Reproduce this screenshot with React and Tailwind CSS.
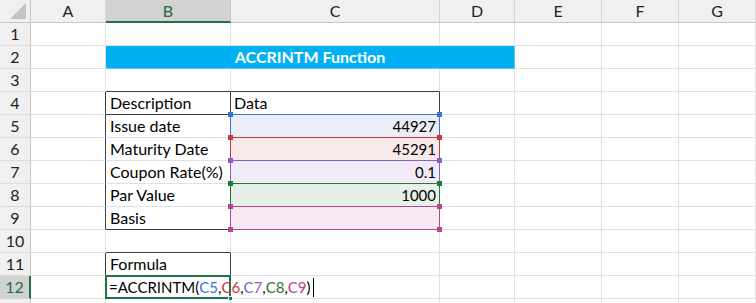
import React from "react";

const GRID = "border-r-[#e1e1e1]";
const GRIDB = "border-b-[#e1e1e1]";

function Cell({ r = GRID, b = GRIDB, className = "", children, span = "" }) {
  return (
    <div className={`relative h-[23px] whitespace-nowrap border-r border-b ${r} ${b} ${span} ${className}`}>
      {children}
    </div>
  );
}

function RowHead({ n, active }) {
  return (
    <div
      className={
        active
          ? "h-[23px] flex items-center justify-center border-b border-b-[#d4d4d4] border-r-2 border-r-[#217346] bg-[#d2d2d2] text-[#1e6b3c] text-[16px]"
          : "h-[23px] flex items-center justify-center border-b border-b-[#dcdcdc] border-r border-r-[#c6c6c6] bg-[#f0f0f0] text-[#222] text-[16px]"
      }
    >
      {n}
    </div>
  );
}

function Handles({ color }) {
  return (
    <>
      <span className={`absolute z-10 -left-[3px] -top-[3px] w-[5px] h-[5px] ${color}`} />
      <span className={`absolute z-10 -right-[3px] -top-[3px] w-[5px] h-[5px] ${color}`} />
      <span className={`absolute z-10 -left-[3px] -bottom-[3px] w-[5px] h-[5px] ${color}`} />
      <span className={`absolute z-10 -right-[3px] -bottom-[3px] w-[5px] h-[5px] ${color}`} />
    </>
  );
}

const DARK_R = "border-r-[#3f3f3f]";
const DARK_B = "border-b-[#3f3f3f]";

// colored reference boxes for C5:C9
const refs = [
  { n: 5, label: "Issue date", value: "44927", line: "border-r-[#3d72d4]", lineB: "border-b-[#3d72d4]", fill: "bg-[#e9eef8]", handle: "bg-[#3d72d4]" },
  { n: 6, label: "Maturity Date", value: "45291", line: "border-r-[#c8363f]", lineB: "border-b-[#c8363f]", fill: "bg-[#fae9e9]", handle: "bg-[#c8363f]" },
  { n: 7, label: "Coupon Rate(%)", value: "0.1", line: "border-r-[#8b5dc6]", lineB: "border-b-[#8b5dc6]", fill: "bg-[#f0ebf7]", handle: "bg-[#8b5dc6]" },
  { n: 8, label: "Par Value", value: "1000", line: "border-r-[#1f7a36]", lineB: "border-b-[#1f7a36]", fill: "bg-[#e6f0e6]", handle: "bg-[#1f7a36]" },
  { n: 9, label: "Basis", value: "", line: "border-r-[#b3478f]", lineB: "border-b-[#b3478f]", fill: "bg-[#f6e9f2]", handle: "bg-[#b3478f]" },
];

// columns E, F, G
function EmptyTail() {
  return (
    <>
      <Cell />
      <Cell />
      <Cell />
    </>
  );
}

export default function App() {
  const cols = ["A", "B", "C", "D", "E", "F", "G"];

  return (
    <div className="w-[756px] h-[303px] overflow-hidden bg-white font-['Lato','Liberation_Sans',sans-serif] text-[16px] text-black">
      <div className="grid grid-cols-[31px_75px_125px_209px_75px_87px_77px_77px]">
        {/* Column headers */}
        <div className="relative h-[23px] bg-[#f0f0f0] border-r border-b border-r-[#c6c6c6] border-b-[#c6c6c6]">
          <svg className="absolute right-[4px] bottom-[3px]" width="16" height="16" viewBox="0 0 16 16">
            <polygon points="16,0 16,16 0,16" fill="#c4c4c4" />
          </svg>
        </div>
        {cols.map((c) =>
          c === "B" ? (
            <div
              key={c}
              className="h-[23px] flex items-center justify-center bg-[#d2d2d2] border-r border-r-[#c6c6c6] border-b-2 border-b-[#217346] text-[#1e6b3c] text-[16px]"
            >
              {c}
            </div>
          ) : (
            <div
              key={c}
              className="h-[23px] flex items-center justify-center bg-[#f0f0f0] border-r border-r-[#d4d4d4] border-b border-b-[#c6c6c6] text-[#222] text-[16px]"
            >
              {c}
            </div>
          )
        )}

        {/* Row 1 */}
        <RowHead n={1} />
        <Cell />
        <Cell />
        <Cell />
        <Cell />
        <EmptyTail />

        {/* Row 2 - title banner */}
        <RowHead n={2} />
        <Cell />
        <Cell
          span="col-span-3"
          r="border-r-[#5cc8f2]"
          b="border-b-[#5cc8f2]"
          className="bg-[#00b0f0] flex items-center justify-center text-white font-bold text-[16px]"
        >
          ACCRINTM Function
        </Cell>
        <EmptyTail />

        {/* Row 3 */}
        <RowHead n={3} />
        <Cell />
        <Cell b={DARK_B} />
        <Cell b={DARK_B} />
        <Cell />
        <EmptyTail />

        {/* Row 4 - table header */}
        <RowHead n={4} />
        <Cell r={DARK_R} />
        <Cell r={DARK_R} b={DARK_B} className="flex items-center pl-[4px]">
          Description
        </Cell>
        <Cell r={DARK_R} b="border-b-[#3d72d4]" className="flex items-center pl-[3px]">
          Data
        </Cell>
        <Cell />
        <EmptyTail />

        {/* Rows 5-9 */}
        {refs.map((row, i) => (
          <React.Fragment key={row.n}>
            <RowHead n={row.n} />
            <Cell r={DARK_R} />
            <Cell
              r={row.line}
              b={i === refs.length - 1 ? DARK_B : GRIDB}
              className="flex items-center pl-[4px]"
            >
              {row.label}
            </Cell>
            <Cell
              r={row.line}
              b={i === refs.length - 1 ? row.lineB : refs[i + 1].lineB}
              className={`flex items-center justify-end pr-[3px] text-[15px] ${row.fill}`}
            >
              {row.value}
              <Handles color={row.handle} />
            </Cell>
            <Cell />
            <EmptyTail />
          </React.Fragment>
        ))}

        {/* Row 10 */}
        <RowHead n={10} />
        <Cell />
        <Cell b={DARK_B} />
        <Cell />
        <Cell />
        <EmptyTail />

        {/* Row 11 */}
        <RowHead n={11} />
        <Cell r={DARK_R} />
        <Cell r={DARK_R} b={DARK_B} className="flex items-center pl-[4px]">
          Formula
        </Cell>
        <Cell />
        <Cell />
        <EmptyTail />

        {/* Row 12 - formula being edited */}
        <RowHead n={12} active />
        <Cell />
        <Cell r="border-r-transparent" className="flex items-center pl-[3px] text-[15px]">
          <span className="absolute -left-[1px] -top-[1px] -right-[1px] -bottom-[1px] border-2 border-[#217346]" />
          <span className="absolute z-10 -right-[3px] -bottom-[3px] w-[5px] h-[5px] bg-[#217346] border border-white" />
          <span className="relative z-20 flex items-center">
            =ACCRINTM(
            <span className="text-[#3d72d4]">C5</span>,
            <span className="text-[#c8363f]">C6</span>,
            <span className="text-[#8b5dc6]">C7</span>,
            <span className="text-[#1f7a36]">C8</span>,
            <span className="text-[#b3478f]">C9</span>)
            <span className="ml-[2px] inline-block w-[1px] h-[19px] bg-black" />
          </span>
        </Cell>
        <Cell />
        <Cell />
        <EmptyTail />

        {/* Row 13, only its top edge is in view */}
        <RowHead n="" />
        <Cell />
        <Cell />
        <Cell />
        <Cell />
        <EmptyTail />
      </div>
    </div>
  );
}
